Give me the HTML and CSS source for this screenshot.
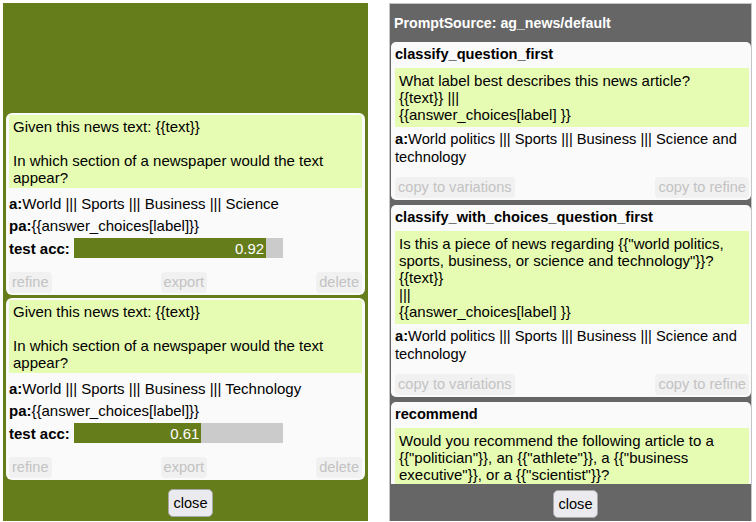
FILE: index.html
```html
<!DOCTYPE html>
<html>
<head>
<meta charset="utf-8">
<link rel="stylesheet" href="styles.css">
</head>
<body>
<div class="screen">
  <section class="panel panel-green">
    <div class="list list-bottom">
      <article class="card">
        <div class="prompt">Given this news text: {{text}}<br><br>In which section of a newspaper would the text appear?</div>
        <div class="row"><b>a:</b><span>World ||| Sports ||| Business ||| Science</span></div>
        <div class="row"><b>pa:</b><span>{{answer_choices[label]}}</span></div>
        <div class="row acc"><b>test acc:</b><div class="bar"><div class="fill" style="width:92%"><span>0.92</span></div></div></div>
        <div class="actions"><button class="ghost">refine</button><button class="ghost">export</button><button class="ghost">delete</button></div>
      </article>
      <article class="card">
        <div class="prompt">Given this news text: {{text}}<br><br>In which section of a newspaper would the text appear?</div>
        <div class="row"><b>a:</b><span>World ||| Sports ||| Business ||| Technology</span></div>
        <div class="row"><b>pa:</b><span>{{answer_choices[label]}}</span></div>
        <div class="row acc"><b>test acc:</b><div class="bar"><div class="fill" style="width:61%"><span>0.61</span></div></div></div>
        <div class="actions"><button class="ghost">refine</button><button class="ghost">export</button><button class="ghost">delete</button></div>
      </article>
    </div>
    <footer class="panel-foot foot-green"><button class="close">close</button></footer>
  </section>

  <section class="panel panel-gray">
    <header class="panel-head">PromptSource: ag_news/default</header>
    <div class="list list-top">
      <article class="card card-src">
        <div class="title">classify_question_first</div>
        <div class="prompt">What label best describes this news article?<br>{{text}} |||<br>{{answer_choices[label] }}</div>
        <div class="answer"><b>a:</b>World politics ||| Sports ||| Business ||| Science and technology</div>
        <div class="actions"><button class="ghost">copy to variations</button><button class="ghost">copy to refine</button></div>
      </article>
      <article class="card card-src">
        <div class="title">classify_with_choices_question_first</div>
        <div class="prompt">Is this a piece of news regarding {{"world politics, sports, business, or science and technology"}}?<br>{{text}}<br>|||<br>{{answer_choices[label] }}</div>
        <div class="answer"><b>a:</b>World politics ||| Sports ||| Business ||| Science and technology</div>
        <div class="actions"><button class="ghost">copy to variations</button><button class="ghost">copy to refine</button></div>
      </article>
      <article class="card card-src">
        <div class="title">recommend</div>
        <div class="prompt">Would you recommend the following article to a {{"politician"}}, an {{"athlete"}}, a {{"business executive"}}, or a {{"scientist"}}?<br>{{text}}<br>|||<br>{{answer_choices[label] }}</div>
        <div class="answer"><b>a:</b>World politics ||| Sports ||| Business ||| Science and technology</div>
      </article>
    </div>
    <footer class="panel-foot foot-gray"><button class="close">close</button></footer>
  </section>
</div>
</body>
</html>
```

FILE: styles.css
```css
* { box-sizing: border-box; }
html, body { margin: 0; padding: 0; background: #ffffff; }
body {
  font-family: "Liberation Sans", Arial, Helvetica, sans-serif;
  font-size: 15px;
  color: #000;
  width: 756px;
  height: 522px;
  overflow: hidden;
}
.screen {
  display: flex;
  gap: 21px;
  padding: 3px 0 0 3px;
}
.panel {
  height: 518px;
  display: flex;
  flex-direction: column;
  overflow: hidden;
}
.panel-green {
  width: 365px;
  background: #667d1b;
}
.panel-gray {
  width: 363px;
  background: #666666;
  border: 1px solid #c4c4c4;
  border-bottom: none;
}
.panel-head {
  height: 36px;
  flex: none;
  display: flex;
  align-items: center;
  padding-left: 4px;
  padding-top: 1px;
  color: #fff;
  font-weight: bold;
  font-size: 14.2px;
}
.list {
  flex: 1;
  min-height: 0;
  overflow: hidden;
  display: flex;
  flex-direction: column;
}
.list-bottom {
  justify-content: flex-end;
  gap: 3px;
  padding: 0 3px 4px;
}
.list-top {
  gap: 5px;
  padding: 2px 0 0 1px;
}
.card {
  flex: none;
  background: #fafafa;
  border-radius: 6px;
  padding: 2px 3px 2px;
}
.card-src {
  padding: 3px 2px 2px 4px;
  border-radius: 5px;
}
.title {
  font-weight: bold;
  font-size: 14.6px;
  line-height: 18px;
}
.prompt {
  background: #e7fcb3;
  line-height: 17px;
  padding: 3px 4px 2px;
}
.card-src .prompt {
  margin-top: 5px;
  padding: 4px 4px 4px;
}
.row {
  display: flex;
  align-items: center;
  height: 22px;
  white-space: nowrap;
}
.prompt + .row { margin-top: 4px; }
.acc { margin-top: 1px; }
.bar {
  width: 209px;
  height: 20px;
  margin-left: 4px;
  background: #cbcbcb;
}
.fill {
  height: 100%;
  background: #667d1b;
  color: #fff;
  display: flex;
  align-items: center;
  justify-content: flex-end;
  padding-right: 2px;
}
.answer {
  font-size: 14.7px;
  line-height: 18px;
  margin-top: 3px;
}
.actions {
  display: flex;
  justify-content: space-between;
  margin-top: 13px;
}
.card-src .actions { margin-top: 11px; }
.ghost {
  font-family: inherit;
  font-size: 14.6px;
  color: #c3c3c3;
  background: #f1f1f1;
  border: none;
  border-radius: 4px;
  height: 21px;
  padding: 0 3px;
  margin: 0;
  line-height: 21px;
}
.panel-foot {
  flex: none;
  height: 37px;
  display: flex;
  justify-content: center;
  align-items: flex-start;
  padding-left: 10px;
}
.foot-green { padding-top: 5px; }
.foot-gray { padding-top: 6px; }
.close {
  font-family: inherit;
  font-size: 14.6px;
  color: #000;
  height: 28px;
  width: 45px;
  padding: 0;
  background: #ebebef;
  border: 1px solid #a8a8a8;
  border-radius: 5px;
}
```
